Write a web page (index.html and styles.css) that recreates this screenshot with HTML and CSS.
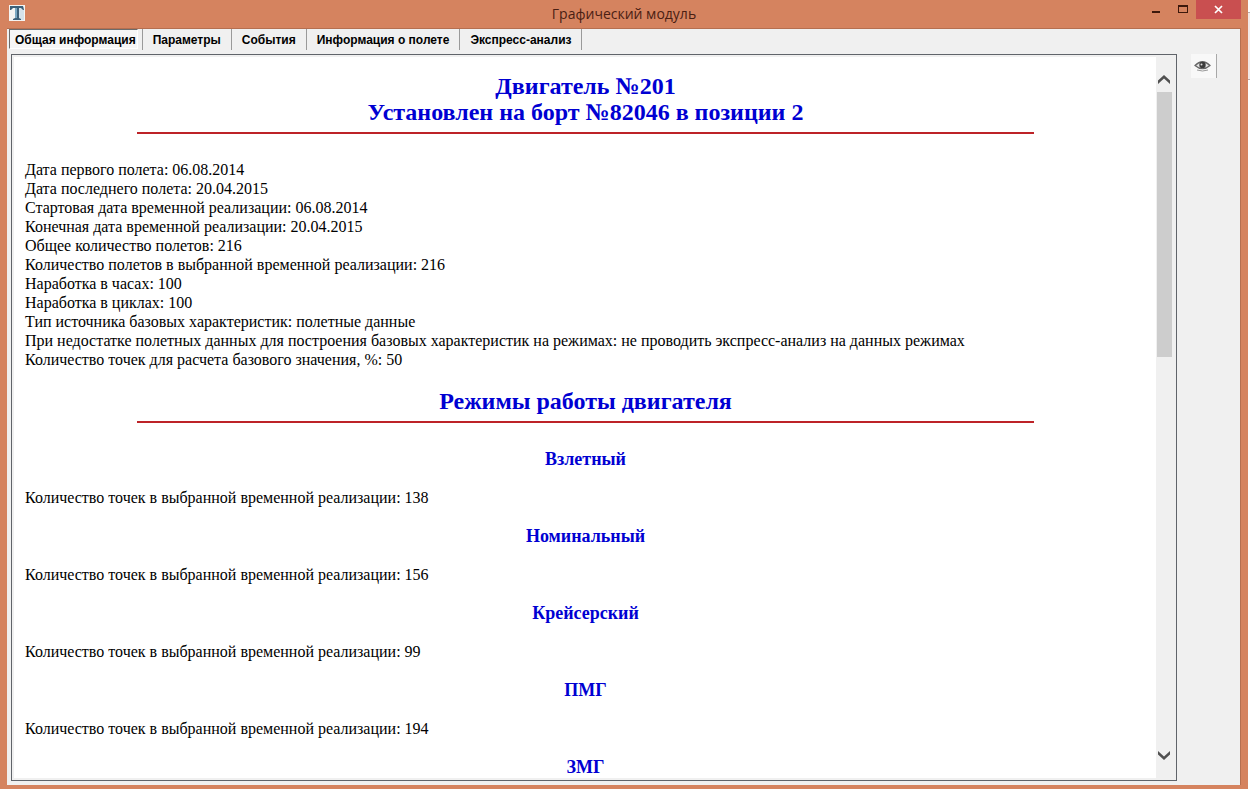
FILE: index.html
```html
<!DOCTYPE html>
<html lang="ru">
<head>
<meta charset="utf-8">
<title>Графический модуль</title>
<link rel="stylesheet" href="styles.css">
</head>
<body>
<div class="desktop">
<div class="window">
  <header class="titlebar">
    <svg class="app-icon" viewBox="0 0 16 16" aria-hidden="true">
      <rect width="16" height="16" fill="#f4f4f2"/>
      <path d="M9 2h6v13H9z" fill="#d5e2ea"/>
      <path d="M1 1h13l1 4h-1l-2-2h-2v10l2 1v1H4v-1l2-1V3H4L2 5H1z" fill="#3d6078"/>
      <path d="M6 3h2v10H6z" fill="#7ba8c2"/>
    </svg>
    <h1 class="title">Графический модуль</h1>
    <div class="controls">
      <button class="control" aria-label="Свернуть"><svg viewBox="0 0 27 19"><path d="M10 11h8v2h-8z" fill="#3c180c"/></svg></button>
      <button class="control" aria-label="Развернуть"><svg viewBox="0 0 27 19"><path d="M9 5h10v8H9zM10 7v5h8V7z" fill="#3c180c" fill-rule="evenodd"/></svg></button>
      <button class="control close" aria-label="Закрыть"><svg viewBox="0 0 45 19"><path d="M19 6l7 7M26 6l-7 7" stroke="#fff" stroke-width="1.700"/></svg></button>
    </div>
  </header>
  <main class="client">
    <section class="left">
      <div class="tabs" role="tablist">
        <button class="tab active" role="tab" aria-selected="true">Общая информация</button>
        <button class="tab" role="tab">Параметры</button>
        <button class="tab" role="tab">События</button>
        <button class="tab" role="tab">Информация о полете</button>
        <button class="tab" role="tab">Экспресс-анализ</button>
      </div>
      <div class="panel">
        <article class="doc">
          <h2>Двигатель №201<br>Установлен на борт №82046 в позиции 2</h2>
          <hr>
          <p class="facts">Дата первого полета: 06.08.2014<br>
          Дата последнего полета: 20.04.2015<br>
          Стартовая дата временной реализации: 06.08.2014<br>
          Конечная дата временной реализации: 20.04.2015<br>
          Общее количество полетов: 216<br>
          Количество полетов в выбранной временной реализации: 216<br>
          Наработка в часах: 100<br>
          Наработка в циклах: 100<br>
          Тип источника базовых характеристик: полетные данные<br>
          При недостатке полетных данных для построения базовых характеристик на режимах: не проводить экспресс-анализ на данных режимах<br>
          Количество точек для расчета базового значения, %: 50</p>
          <h2>Режимы работы двигателя</h2>
          <hr>
          <h3>Взлетный</h3>
          <p>Количество точек в выбранной временной реализации: 138</p>
          <h3>Номинальный</h3>
          <p>Количество точек в выбранной временной реализации: 156</p>
          <h3>Крейсерский</h3>
          <p>Количество точек в выбранной временной реализации: 99</p>
          <h3>ПМГ</h3>
          <p>Количество точек в выбранной временной реализации: 194</p>
          <h3>ЗМГ</h3>
        </article>
        <div class="scrollbar">
          <button class="arrow" aria-label="Вверх"><svg viewBox="0 0 16 16"><path d="M2 13V9.500L8 4l6 5.500V13L8 7.500z" fill="#505050"/></svg></button>
          <div class="track"><div class="thumb"></div></div>
          <button class="arrow" aria-label="Вниз"><svg viewBox="0 0 16 16"><path d="M2 3v3.500L8 12l6-5.500V3L8 8.500z" fill="#505050"/></svg></button>
        </div>
      </div>
    </section>
    <aside class="tools">
      <button class="tool" aria-label="Просмотр">
        <svg viewBox="0 0 18 12"><path d="M1 5.500Q8.500-2 16 5.500 8.500 12 1 5.500z" fill="#e4e4e4" stroke="#666" stroke-width="1.200"/><path d="M3 10q5.500 2 11 0" fill="none" stroke="#999"/><circle cx="8.500" cy="5" r="3.200" fill="#3c3c3c"/><circle cx="7.500" cy="4.500" r="1" fill="#ddd"/></svg>
      </button>
    </aside>
  </main>
</div>
</div>
</body>
</html>
```
FILE: styles.css
```css
* { box-sizing: border-box; }
body { margin: 0; }
button { border: 0; padding: 0; background: none; color: inherit; font: inherit; }
svg { display: block; }
.desktop {
  height: 100vh;
  padding-right: 2px;
  background: linear-gradient(#fff 12px, #b9a9a9 12px 13px, #f3e9e8 13px 79px, #b9a9a9 79px 80px, #fff 80px);
}
.window {
  height: 100%;
  display: flex;
  flex-direction: column;
  padding: 0 7px 4px;
  background: #d5835f;
}
.titlebar {
  display: grid;
  grid-template-columns: 1fr auto 1fr;
  height: 28px;
  flex: none;
}
.app-icon { width: 16px; height: 16px; margin: 5px 0 0 2px; }
.title { margin: 0; font: 14px/28px "Open Sans", "Noto Sans", sans-serif; color: #4a2013; }
.controls { display: flex; justify-content: flex-end; align-items: flex-start; }
.control { width: 27px; height: 19px; }
.control svg { width: 100%; height: 100%; }
.close { width: 45px; background: #c94f50; }
.client {
  flex: 1;
  min-height: 0;
  display: flex;
  border: 1px solid #b56f50;
  border-width: 1px 1px 0 0;
  background: #f0f0f0;
}
.left { flex: 1; min-width: 0; display: flex; flex-direction: column; padding: 0 0 4px 4px; }
.tabs { display: flex; height: 25px; flex: none; margin-left: -2px; }
.tab {
  height: 21px;
  padding: 0 10px;
  border-right: 1px solid #9a9a9a;
  font: bold 12px/20px "Liberation Sans", Arial, sans-serif;
  color: #000;
  white-space: nowrap;
}
.tab.active {
  height: 20px;
  margin-right: 4px;
  padding: 0 1px 0 5px;
  border: 1px solid #fff;
  border-top-color: #6c6c6c;
  border-left: 1px solid #6c6c6c;
  background: #f6f6f6;
}
.tab.active + .tab { border-left: 1px solid #9a9a9a; }
.panel {
  flex: 1;
  min-height: 0;
  display: flex;
  padding: 2px 4px 2px 2px;
  border: 1px solid #60646a;
  background: #f0f0f0;
}
.doc {
  flex: 1;
  overflow: hidden;
  padding: 16px 10px 0 11px;
  background: #fff;
  font: 16px/19px "Liberation Serif", "Times New Roman", serif;
  color: #000;
}
.doc h2, .doc h3 { margin: 0; text-align: center; color: #0000d2; }
.doc h2 { font-size: 24px; line-height: 26px; }
.doc hr { width: 80%; height: 2px; margin: 7px auto 26px; border: 0; background: #bd2328; }
.doc h3 { font-size: 18px; line-height: 20px; }
.doc p { margin: 19px 0; }
.doc .facts { margin: 0 0 19px; }
.scrollbar { width: 16px; flex: none; display: flex; flex-direction: column; }
.arrow { height: 16px; margin: 14px 0 5px; }
.arrow:last-child { margin: 5px 0 14px; }
.arrow svg { width: 16px; height: 16px; }
.track { flex: 1; }
.thumb { height: 265px; margin-left: 1px; background: #cdcdcd; }
.tools { width: 63px; flex: none; padding: 25px 0 0 14px; }
.tool {
  width: 26px;
  height: 24px;
  padding: 0 3px;
  border-right: 1px solid #a8a8a8;
  background: #f8f8f8;
}
.tool svg { width: 18px; height: 12px; }
```
